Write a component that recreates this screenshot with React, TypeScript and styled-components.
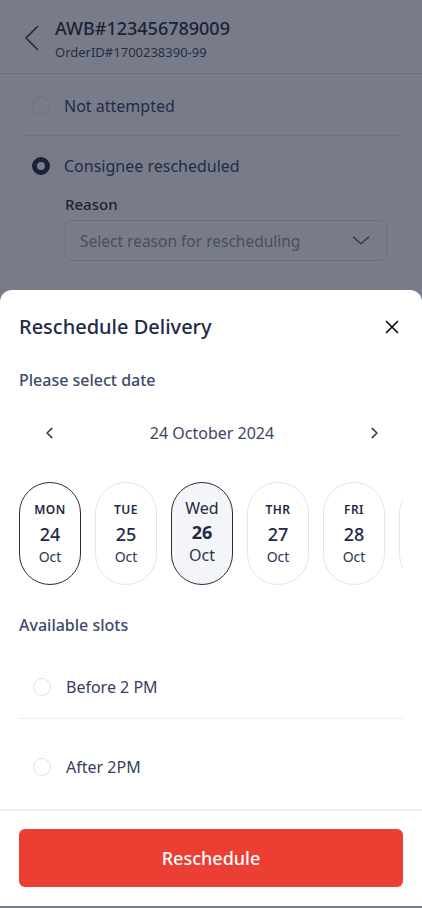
import styled, { createGlobalStyle } from "styled-components";

const GlobalStyle = createGlobalStyle`
  * { box-sizing: border-box; }
  body {
    margin: 0;
    font-family: "Noto Sans", "Open Sans", sans-serif;
    background: #ffffff;
    color: #2a3450;
  }
`;

const Screen = styled.div`
  position: relative;
  width: 422px;
  height: 908px;
  overflow: hidden;
  background: #ffffff;
`;

const Header = styled.header`
  display: flex;
  align-items: flex-start;
  gap: 15px;
  height: 74px;
  padding: 16px 0 0 24px;
  border-bottom: 1px solid #e4e6ee;
`;

const BackIcon = styled.svg`
  margin-top: 9px;
  flex-shrink: 0;
`;

const HeaderText = styled.div`
  display: flex;
  flex-direction: column;
  gap: 2px;
`;

const Awb = styled.div`
  font-size: 18px;
  font-weight: 500;
  color: #1f2a44;
  line-height: 24px;
`;

const OrderId = styled.div`
  font-size: 13px;
  color: #3b4663;
  line-height: 20px;
`;

const StatusList = styled.div`
  padding: 2px 19px 0;
`;

const StatusRow = styled.div<{ $divider?: boolean }>`
  display: flex;
  align-items: center;
  gap: 14px;
  height: 60px;
  padding-left: 13px;
  border-bottom: ${(p) => (p.$divider ? "1px solid #eceef3" : "none")};
`;

const Radio = styled.span<{ $checked?: boolean }>`
  width: 18px;
  height: 18px;
  border-radius: 50%;
  flex-shrink: 0;
  border: ${(p) => (p.$checked ? "5px solid #1f2a44" : "1.5px solid #dfe1ea")};
  background: #ffffff;
`;

const Label = styled.span`
  font-size: 16px;
  color: #34405e;
`;

const ReasonBlock = styled.div`
  padding: 0 35px 0 65px;
  margin-top: -2px;
`;

const ReasonLabel = styled.div`
  font-size: 15px;
  font-weight: 500;
  color: #1f2a44;
  margin-bottom: 6px;
`;

const SelectBox = styled.div`
  display: flex;
  align-items: center;
  justify-content: space-between;
  height: 41px;
  padding: 0 14px;
  border: 1px solid #e1e3eb;
  border-radius: 6px;
  font-size: 15.5px;
  color: #8a93a8;
`;

const Backdrop = styled.div`
  position: absolute;
  inset: 0;
  background: rgba(22, 29, 52, 0.58);
`;

const Sheet = styled.div`
  position: absolute;
  left: 0;
  right: 0;
  bottom: 2px;
  top: 290px;
  background: #ffffff;
  border-radius: 12px 12px 0 0;
  display: flex;
  flex-direction: column;
`;

const SheetBody = styled.div`
  flex: 1;
  padding: 0 19px;
  overflow: hidden;
`;

const SheetHeader = styled.div`
  display: flex;
  align-items: center;
  justify-content: space-between;
  height: 72px;
  padding-top: 1px;
`;

const SheetTitle = styled.h2`
  margin: 0;
  font-size: 20px;
  font-weight: 500;
  color: #1f2a44;
`;

const CloseButton = styled.button`
  border: none;
  background: none;
  padding: 0;
  margin-right: 4px;
  display: flex;
`;

const SectionTitle = styled.div<{ $mt?: number }>`
  font-size: 16px;
  font-weight: 500;
  color: #3d4a6b;
  margin-top: ${(p) => p.$mt ?? 0}px;
`;

const MonthNav = styled.div`
  display: flex;
  align-items: center;
  justify-content: space-between;
  padding: 0 22px 0 24px;
  height: 30px;
  margin-top: 27px;
`;

const MonthLabel = styled.div`
  font-size: 16px;
  color: #3b4663;
`;

const NavButton = styled.button`
  border: none;
  background: none;
  padding: 0;
  display: flex;
`;

const DayStrip = styled.div`
  display: flex;
  gap: 14px;
  margin-top: 34px;
  overflow: hidden;
`;

const DayPill = styled.div<{ $variant: "default" | "outlined" | "selected" }>`
  flex-shrink: 0;
  width: 62px;
  height: 103px;
  border-radius: 31px;
  display: flex;
  flex-direction: column;
  align-items: center;
  justify-content: center;
  border: 1.5px solid
    ${(p) => (p.$variant === "default" ? "#e3e5ee" : "#2a2e38")};
  background: ${(p) => (p.$variant === "selected" ? "#f4f5f8" : "#ffffff")};
  color: #1f2a44;
`;

const DayName = styled.div<{ $big?: boolean }>`
  font-size: ${(p) => (p.$big ? "16px" : "12px")};
  font-weight: ${(p) => (p.$big ? 400 : 600)};
  letter-spacing: ${(p) => (p.$big ? "0" : "0.5px")};
  line-height: 18px;
  margin-top: ${(p) => (p.$big ? "-4px" : "0")};
`;

const DayNum = styled.div<{ $bold?: boolean }>`
  font-size: 18px;
  font-weight: ${(p) => (p.$bold ? 700 : 500)};
  line-height: 24px;
  margin-top: 3px;
`;

const DayMonth = styled.div<{ $big?: boolean }>`
  font-size: ${(p) => (p.$big ? "16px" : "14px")};
  line-height: 20px;
  color: #2d3753;
  margin-top: 1px;
`;

const SlotRow = styled.div<{ $divider?: boolean; $pt: number }>`
  display: flex;
  align-items: center;
  gap: 15px;
  padding: ${(p) => p.$pt}px 0 20px 14px;
  border-bottom: ${(p) => (p.$divider ? "1px solid #eceef3" : "none")};
`;

const Footer = styled.div`
  border-top: 2px solid #eff0f4;
  padding: 18px 19px 19px;
`;

const PrimaryButton = styled.button`
  width: 100%;
  height: 58px;
  border: none;
  border-radius: 6px;
  background: #ec3f33;
  color: #ffffff;
  font-family: inherit;
  font-size: 18px;
  font-weight: 500;
`;

const Chevron = ({ dir, size, color, width }: { dir: "left" | "right" | "down"; size: number; color: string; width: number }) => {
  const d =
    dir === "left" ? "M15 4 L7 12 L15 20" : dir === "right" ? "M9 4 L17 12 L9 20" : "M4 8 L12 15 L20 8";
  return (
    <svg width={size} height={size} viewBox="0 0 24 24" fill="none">
      <path d={d} stroke={color} strokeWidth={width} strokeLinecap="round" strokeLinejoin="round" />
    </svg>
  );
};

const days = [
  { name: "MON", num: "24", variant: "outlined" as const },
  { name: "TUE", num: "25", variant: "default" as const },
  { name: "Wed", num: "26", variant: "selected" as const },
  { name: "THR", num: "27", variant: "default" as const },
  { name: "FRI", num: "28", variant: "default" as const },
];

export default function App() {
  return (
    <Screen>
      <GlobalStyle />
      <Header>
        <BackIcon width="16" height="26" viewBox="0 0 16 26" fill="none">
          <path d="M13.5 1.5 L2 13 L13.5 24.5" stroke="#2a3450" strokeWidth="1.6" strokeLinecap="round" strokeLinejoin="round" />
        </BackIcon>
        <HeaderText>
          <Awb>AWB#123456789009</Awb>
          <OrderId>OrderID#1700238390-99</OrderId>
        </HeaderText>
      </Header>
      <StatusList>
        <StatusRow $divider>
          <Radio />
          <Label>Not attempted</Label>
        </StatusRow>
        <StatusRow>
          <Radio $checked />
          <Label>Consignee rescheduled</Label>
        </StatusRow>
      </StatusList>
      <ReasonBlock>
        <ReasonLabel>Reason</ReasonLabel>
        <SelectBox>
          Select reason for rescheduling
          <Chevron dir="down" size={22} color="#5a6175" width={1.6} />
        </SelectBox>
      </ReasonBlock>

      <Backdrop />

      <Sheet>
        <SheetBody>
          <SheetHeader>
            <SheetTitle>Reschedule Delivery</SheetTitle>
            <CloseButton>
              <svg width="14" height="14" viewBox="0 0 14 14">
                <path d="M1.5 1.5 L12.5 12.5 M12.5 1.5 L1.5 12.5" stroke="#111" strokeWidth="1.7" strokeLinecap="round" />
              </svg>
            </CloseButton>
          </SheetHeader>
          <SectionTitle $mt={7}>Please select date</SectionTitle>
          <MonthNav>
            <NavButton>
              <Chevron dir="left" size={14} color="#3d3f46" width={2.8} />
            </NavButton>
            <MonthLabel>24 October 2024</MonthLabel>
            <NavButton>
              <Chevron dir="right" size={14} color="#3d3f46" width={2.8} />
            </NavButton>
          </MonthNav>
          <DayStrip>
            {days.map((d) => {
              const big = d.variant === "selected";
              return (
                <DayPill key={d.num} $variant={d.variant}>
                  <DayName $big={big}>{d.name}</DayName>
                  <DayNum $bold={big}>{d.num}</DayNum>
                  <DayMonth $big={big}>Oct</DayMonth>
                </DayPill>
              );
            })}
            <DayPill $variant="default" />
          </DayStrip>
          <SectionTitle $mt={29}>Available slots</SectionTitle>
          <SlotRow $divider $pt={40}>
            <Radio />
            <Label>Before 2 PM</Label>
          </SlotRow>
          <SlotRow $pt={37}>
            <Radio />
            <Label>After 2PM</Label>
          </SlotRow>
        </SheetBody>
        <Footer>
          <PrimaryButton>Reschedule</PrimaryButton>
        </Footer>
      </Sheet>
    </Screen>
  );
}
